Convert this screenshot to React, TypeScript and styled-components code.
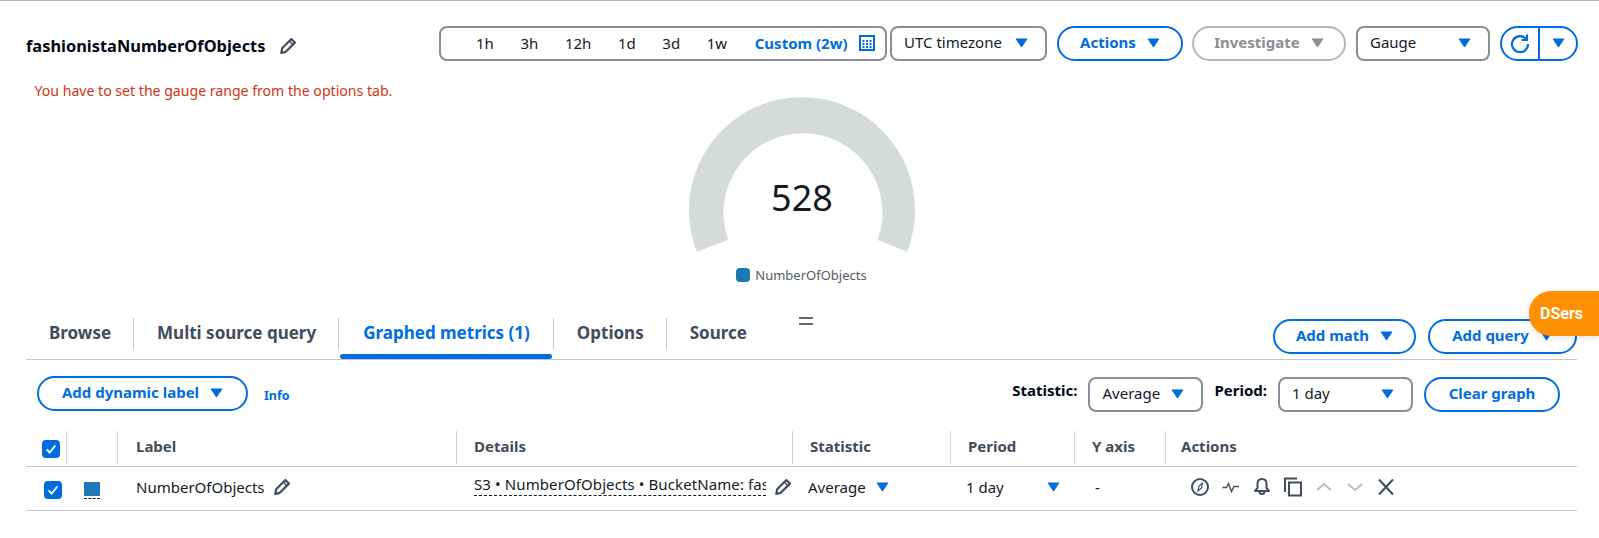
import React from 'react';
import styled, { createGlobalStyle } from 'styled-components';

const BLUE = '#006ce0';
const BORDER = '#8c8c94';
const TEXT = '#16191f';
const MUTED = '#414d5c';
const ICON = '#414d5c';

const tableColumns = '40px 51px 339px 336px 158px 124px 91px 1fr';

function Caret({ color = BLUE }: { color?: string }) {
  return (
    <CaretSvg viewBox="0 0 14 11" width="13" height="10">
      <path d="M1 1h12L7 10z" fill={color} stroke={color} strokeLinejoin="round" />
    </CaretSvg>
  );
}

function Pencil() {
  return (
    <svg viewBox="0 0 16 16" width="18" height="18" fill="none" stroke={ICON} strokeWidth="1.900" strokeLinejoin="round">
      <path d="M11 1.800l3.200 3.200L6 13.200l-4 1 .8-4.200z" />
      <path d="M9.200 3.600l3.200 3.200" strokeWidth="1.200" />
    </svg>
  );
}

function Check() {
  return (
    <svg viewBox="0 0 16 16" width="14" height="14" fill="none" stroke="#fff" strokeWidth="2.200">
      <path d="M3 8.500l3.400 3.500L13 4" />
    </svg>
  );
}

function TimeRange() {
  return (
    <RangeBox>
      {['1h', '3h', '12h', '1d', '3d', '1w'].map((r) => (
        <span key={r}>{r}</span>
      ))}
      <RangeCustom>Custom (2w)</RangeCustom>
      <svg viewBox="0 0 16 16" width="16" height="16">
        <rect x="1" y="1" width="14" height="14" fill="none" stroke={BLUE} strokeWidth="2" />
        <path d="M3.500 5h2v2h-2zM7 5h2v2H7zM10.500 5h2v2h-2zM3.500 8h2v2h-2zM7 8h2v2H7zM10.500 8h2v2h-2zM3.500 11h2v2h-2zM7 11h2v2H7zM10.500 11h2v2h-2z" fill={BLUE} />
      </svg>
    </RangeBox>
  );
}

function Gauge() {
  return (
    <GaugeSvg viewBox="0 0 226 160" width="226" height="160">
      <path d="M7.900 154.700A113 113 0 1 1 218.100 154.700L188.700 143A79.500 79.500 0 1 0 39.300 143z" fill="#d5dbdb" />
      <text x="113" y="114" textAnchor="middle" fontSize="36" fill={TEXT} fontFamily="'Noto Sans', sans-serif">
        528
      </text>
    </GaugeSvg>
  );
}

function RowIcons() {
  const common = { width: 20, height: 20, viewBox: '0 0 20 20', fill: 'none', stroke: ICON, strokeWidth: 2 };
  return (
    <IconRow>
      <svg {...common}>
        <circle cx="10" cy="10" r="8" />
        <path d="M12.500 6l-1 5-3.500 3 1-5z" strokeWidth="1.200" />
      </svg>
      <svg {...common} strokeWidth={1.4}>
        <path d="M1.500 10.500h4l2-4 3 8 2.500-5h5" />
      </svg>
      <svg {...common}>
        <path d="M10 2c-3 0-4.500 2.300-4.500 5v4l-2.500 3h14l-2.500-3V7c0-2.700-1.500-5-4.500-5z" strokeLinejoin="round" />
        <path d="M7.500 14.500a2.500 2.500 0 0 0 5 0" />
      </svg>
      <svg {...common}>
        <rect x="6" y="5.500" width="12" height="13" />
        <path d="M2 15V1.500h12" />
      </svg>
      <svg {...common} stroke="#b6bec9">
        <path d="M3 13l7-6 7 6" />
      </svg>
      <svg {...common} stroke="#b6bec9">
        <path d="M3 7l7 6 7-6" />
      </svg>
      <svg {...common}>
        <path d="M3 2.500l14 15M17 2.500L3 17.500" />
      </svg>
    </IconRow>
  );
}

export default function App() {
  return (
    <Page>
      <GlobalStyle />
      <Header>
        <TitleGroup>
          <Title>fashionistaNumberOfObjects</Title>
          <Pencil />
        </TitleGroup>
        <Controls>
          <TimeRange />
          <Select $width={157}>
            UTC timezone
            <Caret />
          </Select>
          <Button $width={126} $left={7}>
            Actions
            <Caret />
          </Button>
          <DisabledButton $width={154} $left={6}>
            Investigate
            <Caret color="#8d8d94" />
          </DisabledButton>
          <Select $width={134} $left={7}>
            Gauge
            <Caret />
          </Select>
          <SplitButton>
            <SplitPart>
              <svg viewBox="0 0 20 20" width="20" height="20" fill="none" stroke={BLUE} strokeWidth="2.200">
                <path d="M16.500 6.500A8 8 0 1 0 18 11" />
                <path d="M17 1.500V7h-5.500" />
              </svg>
            </SplitPart>
            <SplitDivider />
            <SplitPart>
              <Caret />
            </SplitPart>
          </SplitButton>
        </Controls>
      </Header>

      <ErrorText>You have to set the gauge range from the options tab.</ErrorText>

      <GaugeWrap>
        <Gauge />
        <Legend>
          <LegendDot />
          NumberOfObjects
        </Legend>
      </GaugeWrap>

      <TabBar>
        <Tab>Browse</Tab>
        <Tab>Multi source query</Tab>
        <Tab $active>Graphed metrics (1)</Tab>
        <Tab>Options</Tab>
        <Tab $last>Source</Tab>
        <CollapseMark />
        <TabActions>
          <Button $width={143}>
            Add math
            <Caret />
          </Button>
          <Button $width={149}>
            Add query
            <Caret />
          </Button>
        </TabActions>
      </TabBar>

      <Toolbar>
        <Button $width={211}>
          Add dynamic label
          <Caret />
        </Button>
        <InfoLink>Info</InfoLink>
        <ToolbarRight>
          <FieldLabel>Statistic:</FieldLabel>
          <Select $width={115}>
            Average
            <Caret />
          </Select>
          <FieldLabel>Period:</FieldLabel>
          <Select $width={135}>
            1 day
            <Caret />
          </Select>
          <Button $width={136}>Clear graph</Button>
        </ToolbarRight>
      </Toolbar>

      <HeadRow>
        <HeadCell $first>
          <CheckBox $nudge={-1}>
            <Check />
          </CheckBox>
        </HeadCell>
        <HeadCell />
        <HeadCell $pad={18}>Label</HeadCell>
        <HeadCell>Details</HeadCell>
        <HeadCell>Statistic</HeadCell>
        <HeadCell>Period</HeadCell>
        <HeadCell>Y axis</HeadCell>
        <HeadCell $pad={15}>Actions</HeadCell>
      </HeadRow>

      <BodyRow>
        <Cell $pad={18}>
          <CheckBox>
            <Check />
          </CheckBox>
        </Cell>
        <Cell $pad={18}>
          <Swatch />
        </Cell>
        <Cell $pad={19} $gap={8}>
          NumberOfObjects
          <Pencil />
        </Cell>
        <Cell $pad={18} $gap={8}>
          <DetailsText>S3 • NumberOfObjects • BucketName: fash</DetailsText>
          <Pencil />
        </Cell>
        <Cell $pad={16} $gap={10}>
          Average
          <Caret />
        </Cell>
        <Cell $pad={16}>
          <PeriodValue>1 day</PeriodValue>
          <Caret />
        </Cell>
        <Cell $pad={21}>-</Cell>
        <Cell $pad={25}>
          <RowIcons />
        </Cell>
      </BodyRow>

      <DsersBadge>DSers</DsersBadge>
    </Page>
  );
}

const GlobalStyle = createGlobalStyle`
  html, body {
    margin: 0;
    padding: 0;
    background: #fff;
  }
  body {
    font-family: 'Noto Sans', sans-serif;
    font-size: 15px;
    color: ${TEXT};
  }
`;

const Page = styled.div`
  position: relative;
  box-sizing: border-box;
  width: 1599px;
  height: 538px;
  overflow: hidden;
  padding: 25px 22px 0 26px;
  border-top: 1px solid #b4b4bb;
`;

const CaretSvg = styled.svg`
  flex: none;
`;

const Header = styled.div`
  display: flex;
  align-items: center;
  height: 35px;
`;

const TitleGroup = styled.div`
  display: flex;
  align-items: center;
  gap: 14px;
  padding-top: 4px;
`;

const Title = styled.h1`
  margin: 0;
  font-size: 16.4px;
  font-weight: 700;
  color: #000716;
`;

const Controls = styled.div`
  display: flex;
  align-items: center;
  gap: 3px;
  margin-left: auto;
  margin-right: -1px;
`;

const RangeBox = styled.div`
  box-sizing: border-box;
  display: flex;
  align-items: center;
  width: 448px;
  height: 35px;
  padding: 0 0 2px 35px;
  border: 2px solid ${BORDER};
  border-radius: 8px;
  gap: 26.6px;
`;

const RangeCustom = styled.span`
  color: ${BLUE};
  font-weight: 700;
  margin: 0 -15px 0 1px;
  white-space: nowrap;
`;

const Select = styled.div<{ $width: number; $left?: number }>`
  box-sizing: border-box;
  display: flex;
  align-items: center;
  justify-content: space-between;
  width: ${(p) => p.$width}px;
  height: 35px;
  margin-left: ${(p) => p.$left ?? 0}px;
  padding: 0 17px 3px 12px;
  border: 2px solid ${BORDER};
  border-radius: 8px;
  background: #fff;
  white-space: nowrap;

  ${CaretSvg} {
    margin-top: 1px;
  }
`;

const Button = styled.div<{ $width: number; $left?: number }>`
  box-sizing: border-box;
  display: flex;
  align-items: center;
  justify-content: center;
  gap: 11px;
  width: ${(p) => p.$width}px;
  height: 35px;
  margin-left: ${(p) => p.$left ?? 0}px;
  padding-bottom: 3px;
  border: 2px solid ${BLUE};
  border-radius: 20px;
  background: #fff;
  color: ${BLUE};
  font-weight: 700;
  white-space: nowrap;

  ${CaretSvg} {
    margin-top: 1px;
  }
`;

const DisabledButton = styled(Button)`
  border-color: #b4b4bb;
  color: #8d8d94;
`;

const SplitButton = styled.div`
  box-sizing: border-box;
  display: flex;
  align-items: stretch;
  width: 78px;
  height: 35px;
  margin-left: 7px;
  border: 2px solid ${BLUE};
  border-radius: 20px;
`;

const SplitPart = styled.div`
  display: flex;
  align-items: center;
  justify-content: center;
  flex: 1;
  padding-bottom: 2px;
`;

const SplitDivider = styled.div`
  width: 2px;
  background: ${BLUE};
`;

const ErrorText = styled.div`
  margin: 24px 0 0 8.5px;
  font-size: 14.1px;
  line-height: 12px;
  color: #d13212;
`;

const GaugeWrap = styled.div`
  display: flex;
  flex-direction: column;
  align-items: center;
`;

const GaugeSvg = styled.svg`
  display: block;
`;

const Legend = styled.div`
  display: flex;
  align-items: center;
  gap: 5px;
  height: 14px;
  margin-top: 11px;
  font-size: 13px;
  color: #545b64;
`;

const LegendDot = styled.span`
  width: 14px;
  height: 14px;
  border-radius: 4px;
  background: #1f77b4;
`;

const TabBar = styled.div`
  display: flex;
  align-items: flex-start;
  height: 41px;
  margin-top: 36px;
  border-bottom: 1px solid #c6c6cd;
`;

const Tab = styled.div<{ $active?: boolean; $last?: boolean }>`
  position: relative;
  box-sizing: border-box;
  display: flex;
  align-items: center;
  height: 31px;
  padding: ${(p) => (p.$active ? '0 23px 2px 24px' : '0 22px 2px 23px')};
  border-right: ${(p) => (p.$last ? 'none' : '1px solid #c6c6cd')};
  font-size: 17px;
  font-weight: 700;
  color: ${(p) => (p.$active ? BLUE : MUTED)};
  white-space: nowrap;

  &::after {
    content: '';
    display: ${(p) => (p.$active ? 'block' : 'none')};
    position: absolute;
    left: 1px;
    right: 1px;
    top: 36px;
    height: 5px;
    border-radius: 3px;
    background: ${BLUE};
  }
`;

const CollapseMark = styled.div`
  width: 14px;
  height: 4px;
  margin: -1px 0 0 30px;
  border-top: 2px solid #5f6b7a;
  border-bottom: 2px solid #5f6b7a;
`;

const TabActions = styled.div`
  display: flex;
  gap: 12px;
  margin-left: auto;
  margin-top: 1px;
`;

const Toolbar = styled.div`
  display: flex;
  align-items: flex-start;
  height: 36px;
  margin-top: 16px;
  padding-left: 11px;
`;

const InfoLink = styled.span`
  margin: 11px 0 0 16px;
  font-size: 12.5px;
  font-weight: 700;
  color: ${BLUE};
`;

const ToolbarRight = styled.div`
  display: flex;
  align-items: flex-start;
  gap: 11px;
  margin-left: auto;
  margin-right: 17px;
  margin-top: 1px;
`;

const FieldLabel = styled.span`
  margin-top: 3px;
  font-weight: 700;
  color: #000716;
`;

const HeadRow = styled.div`
  display: grid;
  grid-template-columns: ${tableColumns};
  height: 35px;
  margin-top: 19px;
  border-bottom: 1px solid #c6c6cd;
`;

const HeadCell = styled.div<{ $first?: boolean; $pad?: number }>`
  box-sizing: border-box;
  display: flex;
  align-items: center;
  height: 33px;
  padding: 0 0 3px ${(p) => p.$pad ?? 17}px;
  border-left: ${(p) => (p.$first ? 'none' : '1px solid #d1d5db')};
  font-weight: 700;
  color: ${MUTED};
`;

const BodyRow = styled.div`
  display: grid;
  grid-template-columns: ${tableColumns};
  height: 43px;
  border-bottom: 1px solid #c6c6cd;
`;

const Cell = styled.div<{ $pad: number; $gap?: number }>`
  box-sizing: border-box;
  display: flex;
  align-items: center;
  gap: ${(p) => p.$gap ?? 0}px;
  padding: 0 0 3px ${(p) => p.$pad}px;
  min-width: 0;
  white-space: nowrap;
`;

const CheckBox = styled.span<{ $nudge?: number }>`
  display: flex;
  align-items: center;
  justify-content: center;
  flex: none;
  width: 18px;
  height: 18px;
  margin-top: 5px;
  margin-left: ${(p) => p.$nudge ?? 0}px;
  border-radius: 4px;
  background: ${BLUE};
`;

const Swatch = styled.span`
  display: block;
  box-sizing: content-box;
  width: 16px;
  height: 14px;
  margin-top: 6px;
  padding-bottom: 2px;
  background: #1f77b4 content-box;
  border-bottom: 1px dashed #16191f;
`;

const DetailsText = styled.span`
  display: block;
  width: 292px;
  overflow: hidden;
  margin-top: -5px;
  padding-bottom: 1px;
  letter-spacing: 0.1px;
  border-bottom: 1px dashed #16191f;
`;

const PeriodValue = styled.span`
  width: 81px;
`;

const IconRow = styled.div`
  display: flex;
  align-items: center;
  gap: 11px;
`;

const DsersBadge = styled.div`
  position: absolute;
  top: 290px;
  right: 0;
  display: flex;
  align-items: center;
  box-sizing: border-box;
  width: 70px;
  height: 45px;
  padding-left: 11px;
  border-radius: 22px 0 0 22px;
  background: #ff8f00;
  color: #fff;
  font-family: 'Roboto', sans-serif;
  font-size: 16px;
  font-weight: 700;
  box-shadow: 0 2px 6px rgba(0, 0, 0, 0.12);
`;
